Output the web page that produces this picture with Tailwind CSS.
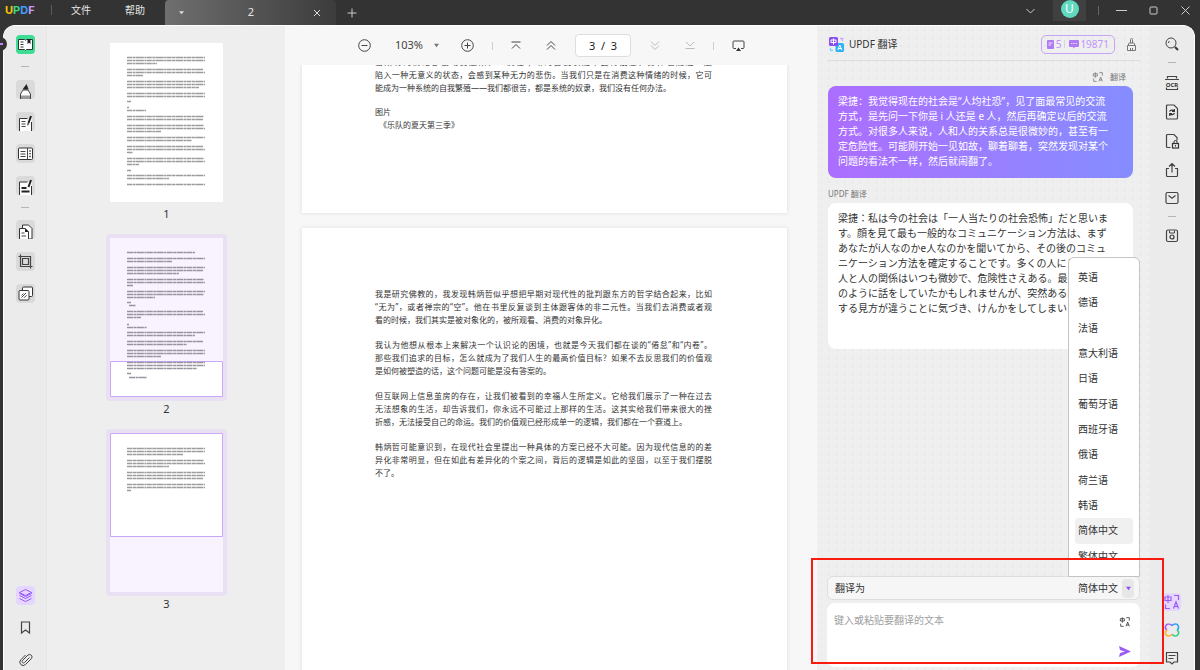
<!DOCTYPE html>
<html lang="zh-CN">
<head>
<meta charset="utf-8">
<title>UPDF</title>
<meta name="viewport" content="width=device-width, initial-scale=1">
<script src="https://cdn.jsdelivr.net/npm/@tailwindcss/browser@4"></script>
</head>
<body class="h-screen overflow-hidden bg-[#333333] font-['Noto_Sans','Noto_Sans_CJK_SC',sans-serif] text-[10px] text-[#333333]">
<svg class="hidden" aria-hidden="true">
  <symbol id="translate" viewBox="0 0 18 18">
    <path d="M2 4h6v3.500H2zM5 2v8M11 2.500h4.500v4.500M2.500 11.500v4H7M10.500 15.500l2.500-6.500 2.500 6.500M11.300 13.500h3.400" fill="none" stroke="currentColor" stroke-width="1.200"/>
  </symbol>
</svg>
<div class="flex h-full flex-col">
  <header class="flex h-[25px] shrink-0 items-start text-[#e6e6e6]">
    <div class="ml-[5px] flex h-5 w-[30px] items-center font-['Inter',sans-serif] text-[11px] font-bold"><span class="text-[#ffc400]">U</span><span class="text-[#35dc7c]">P</span><span class="text-[#3f9bff]">D</span><span class="text-[#c79bff]">F</span></div>
    <span class="mt-[5px] ml-4 h-[10px] w-px bg-[#5c5c5c]"></span>
    <button class="ml-[18px] h-5 px-px">文件</button>
    <button class="ml-8 h-5 px-px">帮助</button>
    <div class="ml-[19px] flex h-full w-[171px] items-center justify-between rounded-t-sm bg-linear-to-r from-[#6f6f6f] to-[#3c3c3c] pr-[15px] pl-[14px]">
      <button aria-label="标签列表"><svg class="size-[5px]" viewBox="0 0 6 6"><path d="M0 1.500h6L3 5z" fill="#ddd"/></svg></button>
      <span class="ml-[5px] text-[11px]">2</span>
      <button aria-label="关闭标签"><svg class="size-2" viewBox="0 0 8 8"><path d="M1 1l6 6M7 1L1 7" stroke="#ddd" stroke-width="1"/></svg></button>
    </div>
    <button class="ml-[11px] h-[25px]" aria-label="新建标签"><svg class="size-[10px]" viewBox="0 0 10 10"><path d="M5 .5v9M.5 5h9" stroke="#ccc"/></svg></button>
    <div class="ml-auto flex items-center">
      <button class="mr-[18px]" aria-label="更多"><svg class="h-5 w-[9px]" viewBox="0 0 9 20"><path d="M.5 8l4 4 4-4" fill="none" stroke="#ccc"/></svg></button>
      <div class="flex h-[21px] w-[33px] items-start justify-center bg-[#404040]"><span class="flex size-[18px] items-center justify-center rounded-full bg-[#5fd9bf] text-[12px] text-white">U</span></div>
      <span class="ml-3 h-[9px] w-px bg-[#666]"></span>
      <button class="ml-[17px]" aria-label="最小化"><svg class="h-5 w-[11px]" viewBox="0 0 11 20"><path d="M0 9.500h11" stroke="#ccc"/></svg></button>
      <button class="ml-[22px]" aria-label="最大化"><svg class="size-[9px]" viewBox="0 0 9 9"><rect x="1" y="1" width="7" height="7" rx="1" fill="none" stroke="#ccc"/></svg></button>
      <button class="mr-[10px] ml-[23px]" aria-label="关闭"><svg class="size-[9px]" viewBox="0 0 9 9"><path d="M.5.5l8 8M8.500.5l-8 8" stroke="#ccc"/></svg></button>
    </div>
  </header>

  <div class="relative mr-[5px] ml-[3px] flex min-h-0 flex-1">
    <div class="flex min-w-0 flex-1 overflow-hidden rounded-t-xl border border-b-0 border-white bg-[#eeeeee]">
      <nav class="flex w-[43px] shrink-0 flex-col items-center border-r border-[#e6e6e6] bg-[#ebebeb] pt-[9px] pb-px" aria-label="工具">
        <button class="size-[19px] rounded-sm bg-[#3fdc96]" aria-label="阅读"><svg viewBox="0 0 19 19"><path d="M2.500 4.500h6l1 .8 1-.8h6v10h-6l-1 1-1-1h-6z" fill="#fff" stroke="#333"/><path d="M11.500 4h3v5l-1.500-1.200L11.500 9z" fill="#222"/><path d="M4.500 7h3M4.500 9.500h3M4.500 12h3" stroke="#333"/></svg></button>
        <span class="mt-3 mb-[13px] h-[1px] w-2 bg-[#b5b5b5]"></span>
        <div class="flex flex-col gap-[13px]">
          <button class="size-[19px] rounded-sm bg-[#dadada]" aria-label="注释"><svg viewBox="0 0 19 19"><path d="M4.500 19v-5l2.500-4h5l2.500 4v5z" fill="#fff" stroke="#444"/><path d="M5 15.500h9V19H5z" fill="#999"/><path d="M6.500 9.500L10.500 4l2.200 5.500z" fill="#222"/></svg></button>
          <button class="size-[19px] rounded-sm bg-[#dadada]" aria-label="编辑"><svg viewBox="0 0 19 19"><path d="M3.500 19V6.500h12V19z" fill="#fff"/><path d="M3.500 19V6.500h8M15.500 10v9" fill="none" stroke="#333"/><path d="M5.500 9.500h4M5.500 12h4M5.500 14.500h4" stroke="#444"/><path d="M15 4l-2.500 7" stroke="#222" stroke-width="2"/><path d="M11.500 11l1.800.6-1.800 2.400z" fill="#222"/></svg></button>
          <button class="size-[19px] rounded-sm bg-[#dadada]" aria-label="表单"><svg viewBox="0 0 19 19"><rect x="2.500" y="4" width="14" height="11.500" rx="1" fill="#fff" stroke="#333"/><path d="M11.500 4v11.500M4.500 7.500h5M4.500 10h5M4.500 12.500h5" stroke="#444"/><path d="M13.200 7h1.600M13.200 9.700h1.600M13.200 12.500h1.600" stroke="#444" stroke-width="1.300"/></svg></button>
          <button class="size-[19px] rounded-sm bg-[#dadada]" aria-label="密文"><svg viewBox="0 0 19 19"><path d="M3.500 19V6h12v13z" fill="#fff"/><path d="M3.500 19V6h8M15.500 10v9" fill="none" stroke="#333"/><path d="M5.500 12h5M5.500 15.500h8" stroke="#222" stroke-width="2"/><path d="M15 4l-2.500 7" stroke="#222" stroke-width="2"/></svg></button>
        </div>
        <span class="my-3 h-[1px] w-2 bg-[#b5b5b5]"></span>
        <div class="flex flex-col gap-[13px]">
          <button class="size-[19px] rounded-sm bg-[#dadada]" aria-label="页面"><svg viewBox="0 0 19 19"><path d="M6.500 8V5h6l3.500 3.500V19h-3" fill="#fff" stroke="#333"/><path d="M3.500 19V8.500H9l3.500 3.500v7" fill="#fff" stroke="#333"/><path d="M9 8v4h4z" fill="#222"/><path d="M5.500 13h3M5.500 16h4.500" stroke="#444"/></svg></button>
          <button class="size-[19px] rounded-sm bg-[#dadada]" aria-label="裁剪"><svg viewBox="0 0 19 19"><path d="M2.500 4.500h12v12M4.500 2.500v12h12M6.500 6.500h6v6h-6z" fill="none" stroke="#444" stroke-width="1.200"/></svg></button>
          <button class="size-[19px] rounded-sm bg-[#dadada]" aria-label="水印"><svg viewBox="0 0 19 19"><rect x="6.500" y="3" width="10" height="9.500" rx="1" fill="#fff" stroke="#333"/><rect x="3" y="6.500" width="10" height="9.500" rx="1" fill="#fff" stroke="#333"/><path d="M5.500 11.500l2-2M5.500 13.500l4.500-4.500M8 13.800l2.500-2.500" stroke="#444"/></svg></button>
        </div>
        <div class="mt-auto flex flex-col gap-[13px]">
          <button class="size-[19px] rounded-sm bg-[#e4d6ff]" aria-label="图层"><svg viewBox="0 0 19 19"><path d="M9.500 3.500l6 3-6 3-6-3zM3.500 9.500l6 3 6-3M3.500 12.500l6 3 6-3M3.500 6.500v1l6 3 6-3v-1" fill="none" stroke="#9a5cf5"/></svg></button>
          <button class="size-[19px]" aria-label="书签"><svg viewBox="0 0 19 19"><path d="M5.500 4h8v11l-4-3-4 3z" fill="none" stroke="#444" stroke-width="1.200"/></svg></button>
          <button class="size-[19px]" aria-label="附件"><svg viewBox="0 0 19 19"><path d="M13.500 7.500l-5 5a1.300 1.300 0 0 1-2-2l5.500-5.500a2.500 2.500 0 0 1 3.500 3.500l-6 6a3.300 3.300 0 0 1-4.700-4.700L9.500 5" fill="none" stroke="#444"/></svg></button>
        </div>
      </nav>

      <aside class="flex w-[238px] shrink-0 flex-col items-start gap-3 pt-[13px] pl-[59px] text-[11px]" aria-label="缩略图">
        <figure class="w-[121px]">
          <div class="p-1"><svg class="block w-full bg-white" viewBox="0 0 113 159"><path stroke="#9c9c9c" stroke-width="1.300" stroke-dasharray="5 .5 3 .4 8 .5 2 .4" d="M17 14.500h78M17 17.500h78M17 20.500h30M17 26.500h76M17 29.500h78M17 32.500h16M17 38.500h78M17 41.500h78M17 44.500h72M17 50.500h78M17 53.500h78M17 58.500h4M17 64.500h2M17 67.500h19M17 73.500h77M17 76.500h76M17 82.500h77M17 85.500h78M17 88.500h34M17 94.500h78M17 97.500h65M17 103.500h76M17 106.500h78M17 109.500h6M17 115.500h77M17 118.500h78M17 121.500h12M17 127.500h4M17 132.500h78M17 135.500h42M17 141.500h78"/></svg></div>
          <figcaption class="text-center leading-4">1</figcaption>
        </figure>
        <figure class="w-[121px]">
          <div class="rounded-sm bg-[#e9e1f3] p-1"><svg class="block w-full bg-[#f8f3ff]" viewBox="0 0 113 159"><path fill="#fff" stroke="#c9a9f7" d="M.5 123.500h112v35H.5z"/><path stroke="#98939f" stroke-width="1.300" stroke-dasharray="6 .5 3 .4 7 .5 2 .4" d="M17 14.500h68M17 20.500h78M17 23.500h45M17 29.500h78M17 32.500h76M17 35.500h52M17 41.500h77M17 44.500h78M17 47.500h6M17 53.500h78M17 56.500h77M17 59.500h28M17 64.500h4M19 67.500h7M17 73.500h76M17 76.500h78M17 79.500h14M17 86.500h2M17 89.500h20M17 94.500h78M17 97.500h68M17 103.500h76M17 106.500h60M17 112.500h78M17 115.500h78M17 118.500h34M17 124.500h78M17 127.500h78M17 130.500h70M17 135.500h4M19 139.500h18"/></svg></div>
          <figcaption class="text-center leading-4">2</figcaption>
        </figure>
        <figure class="w-[121px]">
          <div class="rounded-sm bg-[#e9e1f3] p-1"><svg class="block w-full bg-[#f8f3ff]" viewBox="0 0 113 159"><path fill="#fff" stroke="#c9a9f7" d="M.5.5h112v103H.5z"/><path stroke="#9c9c9c" stroke-width="1.300" stroke-dasharray="5 .5 4 .4 7 .5 2 .4" d="M17 15.500h78M17 18.500h78M17 21.500h56M17 27.500h77M17 30.500h78M17 33.500h42M17 39.500h78M17 42.500h78M17 45.500h76M17 51.500h78M17 54.500h78M17 57.500h4"/></svg></div>
          <figcaption class="text-center leading-4">3</figcaption>
        </figure>
      </aside>

      <main class="flex min-w-0 flex-1 flex-col bg-[#f7f7f7]">
        <div class="flex h-[39px] shrink-0 items-center justify-center pl-px text-[#444]">
          <button aria-label="缩小"><svg class="size-[13px]" viewBox="0 0 13 13"><circle cx="6.500" cy="6.500" r="5.800" fill="none" stroke="#444"/><path d="M3.500 6.500h6" stroke="#444"/></svg></button>
          <button class="ml-6 flex items-center gap-[11px] text-[11px]">103%<svg class="size-[5px]" viewBox="0 0 6 6"><path d="M0 1h6L3 5z" fill="#777"/></svg></button>
          <button class="ml-[22px]" aria-label="放大"><svg class="size-[13px]" viewBox="0 0 13 13"><circle cx="6.500" cy="6.500" r="5.800" fill="none" stroke="#444"/><path d="M3.500 6.500h6M6.500 3.500v6" stroke="#444"/></svg></button>
          <span class="mx-[18px] h-2 w-px bg-[#cfcfcf]"></span>
          <button aria-label="首页"><svg class="h-[9px] w-[10px]" viewBox="0 0 10 9"><path d="M.5 1h9M1 7.500l4-4 4 4" fill="none" stroke="#444"/></svg></button>
          <button class="ml-[25px]" aria-label="上一页"><svg class="h-[9px] w-[10px]" viewBox="0 0 10 9"><path d="M1 4.500l4-4 4 4M1 8.500l4-4 4 4" fill="none" stroke="#444"/></svg></button>
          <input class="ml-[19px] h-[23px] w-[56px] rounded border border-[#dedede] bg-white text-center text-[11px] text-[#222]" value="3  /  3" aria-label="页码">
          <button class="ml-[19px]" aria-label="下一页"><svg class="h-[9px] w-[10px]" viewBox="0 0 10 9"><path d="M1 .5l4 4 4-4M1 4.500l4 4 4-4" fill="none" stroke="#bbb"/></svg></button>
          <button class="ml-[25px]" aria-label="末页"><svg class="h-[9px] w-[10px]" viewBox="0 0 10 9"><path d="M1 1l4 4 4-4M.5 7.500h9" fill="none" stroke="#bbb"/></svg></button>
          <span class="mx-[18px] h-2 w-px bg-[#cfcfcf]"></span>
          <button aria-label="演示"><svg class="h-[12px] w-[13px]" viewBox="0 0 13 12"><path d="M4 8.500H2a1 1 0 0 1-1-1v-5.500a1 1 0 0 1 1-1h9a1 1 0 0 1 1 1v5.500a1 1 0 0 1-1 1H9" fill="none" stroke="#444"/><path d="M6.500 7.500L9 11H4z" fill="#333"/></svg></button>
        </div>
        <div class="flex min-h-0 flex-1 flex-col gap-[15px] overflow-hidden pr-[30px] pl-[17px] text-[8px] leading-[13px]">
          <article class="flex h-[148px] shrink-0 flex-col gap-[11px] bg-white pr-[75px] pl-[73px] shadow-[0_0_4px_#dcdcdc]">
            <p class="-mt-[10px]"><span class="block [text-align-last:justify]">当所有的情绪都被动员起来，人们在不断的自我表达中变得疲惫，身体也随之一起</span><span class="block [text-align-last:justify]">陷入一种无意义的状态，会感到某种无力的悲伤。当我们只是在消费这种情绪的时候，它可</span><span class="block">能成为一种系统的自我繁殖——我们都很苦，都是系统的奴隶，我们没有任何办法。</span></p>
            <p>图片<br><span class="pl-1">《乐队的夏天第三季》</span></p>
          </article>
          <article class="flex min-h-[500px] shrink-0 flex-col gap-3 bg-white pt-[59px] pr-[75px] pl-[73px] shadow-[0_0_4px_#dcdcdc]">
            <p><span class="block [text-align-last:justify]">我是研究佛教的，我发现韩炳哲似乎想把早期对现代性的批判跟东方的哲学结合起来，比如</span><span class="block [text-align-last:justify]">“无为”，或者禅宗的“空”。他在书里反复谈到主体跟客体的非二元性。当我们去消费或者观</span><span class="block">看的时候，我们其实是被对象化的，被所观看、消费的对象异化。</span></p>
            <p><span class="block [text-align-last:justify]">我认为他想从根本上来解决一个认识论的困境，也就是今天我们都在谈的“倦怠”和“内卷”。</span><span class="block [text-align-last:justify]">那些我们追求的目标，怎么就成为了我们人生的最高价值目标？如果不去反思我们的价值观</span><span class="block">是如何被塑造的话，这个问题可能是没有答案的。</span></p>
            <p><span class="block [text-align-last:justify]">但互联网上信息茧房的存在，让我们被看到的幸福人生所定义。它给我们展示了一种在过去</span><span class="block [text-align-last:justify]">无法想象的生活，却告诉我们，你永远不可能过上那样的生活。这其实给我们带来很大的挫</span><span class="block">折感，无法接受自己的命运。我们的价值观已经形成单一的逻辑，我们都在一个赛道上。</span></p>
            <p><span class="block [text-align-last:justify]">韩炳哲可能意识到，在现代社会里提出一种具体的方案已经不大可能。因为现代信息的的差</span><span class="block [text-align-last:justify]">异化非常明显，但在如此有差异化的个案之间，背后的逻辑是如此的坚固，以至于我们摆脱</span><span class="block">不了。</span></p>
          </article>
        </div>
      </main>

      <section class="flex w-[333px] shrink-0 flex-col bg-[#efefef] bg-[radial-gradient(#e6e6e6_12%,transparent_14%)] bg-[size:8px_8px] px-[10px] pb-[3px]" aria-label="UPDF 翻译">
        <div class="flex h-[35px] shrink-0 items-center border-b border-[#dedede] pt-[2px] pl-[2px]">
          <svg class="size-[15px]" viewBox="0 0 15 15"><rect x="6.500" y="6" width="8.500" height="9" rx="1.500" fill="#2fb4f5"/><rect width="9" height="9" rx="1.500" fill="#8a4ff0"/><path d="M2 3h5v2.500H2zM4.500 1.500v6" fill="none" stroke="#fff"/><path d="M8.800 13l2-5 2 5M9.500 11.500h2.700" fill="none" stroke="#fff"/><path d="M11 1.500h2.500V4" fill="none" stroke="#c9a3ff" stroke-width="1.300"/><path d="M1.500 11v2.500H4" fill="none" stroke="#7fd4ff" stroke-width="1.300"/></svg>
          <h1 class="ml-[5px]">UPDF 翻译</h1>
          <div class="ml-auto flex h-[19px] items-center rounded-[5px] border border-[#c7a3f7] px-[5px] text-[#bf94f7]">
            <svg class="mr-[2px] h-[9px] w-[7px]" viewBox="0 0 7 9"><rect width="7" height="9" rx="1" fill="#b07af5"/><path d="M1.500 3h4M1.500 5h2.500" stroke="#fff" stroke-width=".8"/></svg><span>5</span>
            <span class="mr-[4px] ml-[3px] h-2 w-px bg-[#dccdf0]"></span>
            <svg class="mr-[1px] h-[9px] w-[10px]" viewBox="0 0 10 9"><path d="M1 0h8a1 1 0 0 1 1 1v5a1 1 0 0 1-1 1H6L4.500 8.500 4 7H1a1 1 0 0 1-1-1V1a1 1 0 0 1 1-1z" fill="#b07af5"/><path d="M2.300 3.500h1M4.500 3.500h1M6.700 3.500h1" stroke="#fff"/></svg><span>19871</span>
          </div>
          <button class="mr-1 ml-3" aria-label="清空"><svg class="h-[13px] w-[9px]" viewBox="0 0 9 13"><path d="M3.500 5V1.500a1 1 0 0 1 2 0V5M1.500 7.500V6a1 1 0 0 1 1-1h4a1 1 0 0 1 1 1v1.500M.5 7.500h8v5h-8zM3.500 12.500V10M5.500 12.500V10" fill="none" stroke="#777"/></svg></button>
        </div>
        <div class="flex h-[25px] shrink-0 items-end justify-end gap-[6px] pr-[14px] text-[8px] leading-[18px] text-[#777]"><svg class="mb-[3px] size-3"><use href="#translate"/></svg>翻译</div>
        <div class="mr-[7px] ml-px shrink-0 rounded-lg bg-linear-to-r from-[#ac6dff] to-[#848dff] px-[10px] pt-2 pb-[9px] leading-[15px] text-white">梁捷：我觉得现在的社会是“人均社恐”，见了面最常见的交流<br>方式，是先问一下你是 i 人还是 e 人，然后再确定以后的交流<br>方式。对很多人来说，人和人的关系总是很微妙的，甚至有一<br>定危险性。可能刚开始一见如故，聊着聊着，突然发现对某个<br>问题的看法不一样，然后就闹翻了。</div>
        <h2 class="mt-[9px] ml-px text-[8px] leading-[14px] text-[#777]">UPDF 翻译</h2>
        <div class="mt-[2px] mr-[7px] ml-px min-h-[146px] shrink-0 rounded-lg bg-white px-[10px] pt-2 font-['Noto_Sans','Noto_Sans_CJK_JP',sans-serif] leading-[15px]" lang="ja">梁捷：私は今の社会は「一人当たりの社会恐怖」だと思いま<br>す。顔を見て最も一般的なコミュニケーション方法は、まず<br>あなたがi人なのかe人なのかを聞いてから、その後のコミュ<br>ニケーション方法を確定することです。多くの人にとって、<br>人と人の関係はいつも微妙で、危険性さえある。最初は旧知<br>のように話をしていたかもしれませんが、突然ある問題に対<br>する見方が違うことに気づき、けんかをしてしまいました。</div>

        <div class="relative mt-auto flex h-6 shrink-0 items-center justify-between rounded-[6px] border border-[#dedede] bg-[#f6f6f6] pr-[5px] pl-[7px]">
          <label for="target">翻译为</label>
          <div class="relative flex items-center">
            <select id="target" class="h-[19px] w-[62px] appearance-none bg-transparent pr-4 text-right text-[10px]"><option>简体中文</option><option>英语</option><option>日语</option></select>
            <span class="pointer-events-none absolute right-0 flex h-[19px] w-3 items-center justify-center rounded-sm bg-[#e7e7e7]"><svg class="size-[5px]" viewBox="0 0 6 6"><path d="M0 1h6L3 5z" fill="#8b4df5"/></svg></span>
          </div>
          <div class="absolute -right-px bottom-full h-[320px] w-[72px] rounded-t-md border border-[#c4c4c4] bg-white px-[6px] pt-[7px]">
            <div class="h-[295px] overflow-hidden">
              <ul class="grid h-[304px] grid-rows-12">
                <li class="grid"><button class="rounded pl-[3px] text-left">英语</button></li>
                <li class="grid"><button class="rounded pl-[3px] text-left">德语</button></li>
                <li class="grid"><button class="rounded pl-[3px] text-left">法语</button></li>
                <li class="grid"><button class="rounded pl-[3px] text-left">意大利语</button></li>
                <li class="grid"><button class="rounded pl-[3px] text-left">日语</button></li>
                <li class="grid"><button class="rounded pl-[3px] text-left">葡萄牙语</button></li>
                <li class="grid"><button class="rounded pl-[3px] text-left">西班牙语</button></li>
                <li class="grid"><button class="rounded pl-[3px] text-left">俄语</button></li>
                <li class="grid"><button class="rounded pl-[3px] text-left">荷兰语</button></li>
                <li class="grid"><button class="rounded pl-[3px] text-left">韩语</button></li>
                <li class="grid"><button class="rounded bg-[#f0f0f0] pl-[3px] text-left">简体中文</button></li>
                <li class="grid"><button class="rounded pl-[3px] text-left">繁体中文</button></li>
              </ul>
            </div>
          </div>
        </div>
        <div class="mt-[3px] flex h-16 shrink-0 rounded-lg bg-white pt-[10px] pr-[9px] pb-[10px] pl-[7px]">
          <textarea class="flex-1 resize-none text-[10px] leading-[15px] outline-none placeholder:text-[#a0a0a0]" placeholder="键入或粘贴要翻译的文本" aria-label="要翻译的文本"></textarea>
          <div class="flex flex-col items-center justify-between pt-[3px] text-[#333]">
            <button aria-label="翻译模式"><svg class="block size-3"><use href="#translate"/></svg></button>
            <button aria-label="发送"><svg class="block h-[11px] w-3" viewBox="0 0 12 11"><path d="M0 0l12 5.500L0 11l1-4 5-1.500L1 4z" fill="#9a5cf5"/></svg></button>
          </div>
        </div>
      </section>

      <nav class="flex w-[44px] shrink-0 flex-col items-center bg-[#ebebeb] pt-[9px] pb-[3px]" aria-label="侧边工具">
        <button class="size-[18px]" aria-label="搜索"><svg viewBox="0 0 18 18"><circle cx="8" cy="8" r="5" fill="none" stroke="#444"/><path d="M5.500 8a2.500 2.500 0 0 1 1-2" fill="none" stroke="#444"/><path d="M12 12l3 3" stroke="#333" stroke-width="2"/></svg></button>
        <span class="mt-[9px] mb-[11px] h-[1px] w-2 bg-[#b5b5b5]"></span>
        <div class="flex flex-col gap-[11px]">
          <button class="size-[18px]" aria-label="OCR"><svg viewBox="0 0 18 18"><path d="M4.500 4.500v-2h9v2M2 5.500h14M3.500 13.500v2h11v-2" fill="none" stroke="#444" stroke-width="1.200"/><text x="9" y="12.500" text-anchor="middle" font-size="6" font-weight="700" fill="#333">OCR</text></svg></button>
          <button class="size-[18px]" aria-label="转换"><svg viewBox="0 0 18 18"><path d="M4.500 2h6.500l3.500 3.500V15a1 1 0 0 1-1 1h-9a1 1 0 0 1-1-1V3a1 1 0 0 1 1-1z" fill="none" stroke="#444" stroke-width="1.200"/><path d="M6.500 8.500A2.800 2.800 0 0 1 11 8M11.500 10A2.800 2.800 0 0 1 7 11M11.300 6v2.300H9M6.700 13v-2.300H9" fill="none" stroke="#333" stroke-width="1.200"/></svg></button>
          <button class="size-[18px]" aria-label="加密"><svg viewBox="0 0 18 18"><path d="M7.500 15.500h-3a1 1 0 0 1-1-1v-11a1 1 0 0 1 1-1H11L14 5.500v3" fill="none" stroke="#444" stroke-width="1.200"/><rect x="9.500" y="11.500" width="6" height="4.500" fill="none" stroke="#333" stroke-width="1.200"/><path d="M11 11.500V10a1.500 1.500 0 0 1 3 0v1.500M12.500 13v1.500" fill="none" stroke="#333"/></svg></button>
          <button class="size-[18px]" aria-label="分享"><svg viewBox="0 0 18 18"><path d="M6 7.500H3.500v7a1 1 0 0 0 1 1h9a1 1 0 0 0 1-1v-7H12M9 11.500V3M6 5.500L9 2.500l3 3" fill="none" stroke="#444" stroke-width="1.200"/></svg></button>
          <button class="size-[18px]" aria-label="邮件"><svg viewBox="0 0 18 18"><rect x="3" y="2.500" width="12" height="11" rx="1.500" fill="none" stroke="#444" stroke-width="1.200"/><path d="M5.500 5.500L9 8.300 12.500 5.500" fill="none" stroke="#444" stroke-width="1.200"/></svg></button>
        </div>
        <span class="mt-2 mb-[10px] h-[1px] w-2 bg-[#b5b5b5]"></span>
        <button class="size-[18px]" aria-label="保存"><svg viewBox="0 0 18 18"><rect x="3.500" y="3" width="11" height="11.500" rx="1.500" fill="none" stroke="#444" stroke-width="1.200"/><path d="M6.500 3.500V6h5V3.500" fill="none" stroke="#444"/><circle cx="9" cy="10" r="2" fill="none" stroke="#333" stroke-width="1.200"/></svg></button>
        <div class="mt-auto flex flex-col gap-[10px]">
          <button class="size-[18px] rounded-sm bg-[#e4d6ff] text-[#9a5cf5]" aria-label="翻译"><svg class="size-full"><use href="#translate"/></svg></button>
          <button class="size-[18px]" aria-label="AI 助手"><svg viewBox="0 0 18 18" fill="none" stroke-width="1.600"><path d="M4 9C1 7 2.500 2.800 5.700 3q2.300 0 3.300 1.800" stroke="#a05cf5"/><path d="M9 4.800C10 3 14 2 15.300 4.800 16 6.800 15.300 8.200 14 9" stroke="#2fa4f5"/><path d="M14 9c3 2 1.500 6.200-1.700 6q-2.300 0-3.300-1.800" stroke="#35cf8c"/><path d="M9 13.200C8 15 4 16 2.700 13.200 2 11.200 2.700 9.800 4 9" stroke="#ffb42e"/></svg></button>
          <button class="size-[18px]" aria-label="评论"><svg viewBox="0 0 18 18"><path d="M3.500 3.500h11v9.500h-3.500l-2 2-2-2H3.500zM5.500 6.500h7M5.500 9.500h5" fill="none" stroke="#444" stroke-width="1.200"/></svg></button>
        </div>
      </nav>
    </div>

    <div class="absolute top-3 -left-[10px] size-[14px] rounded-full bg-[#333333]"></div>
    <div class="absolute top-[18px] -left-[3px] h-[2px] w-[3px] bg-[#b98aff]"></div>
    <div class="pointer-events-none absolute right-[31px] bottom-[6px] h-[106px] w-[353px] border-2 border-[#fb1a10]"></div>
  </div>
</div>
</body>
</html>
